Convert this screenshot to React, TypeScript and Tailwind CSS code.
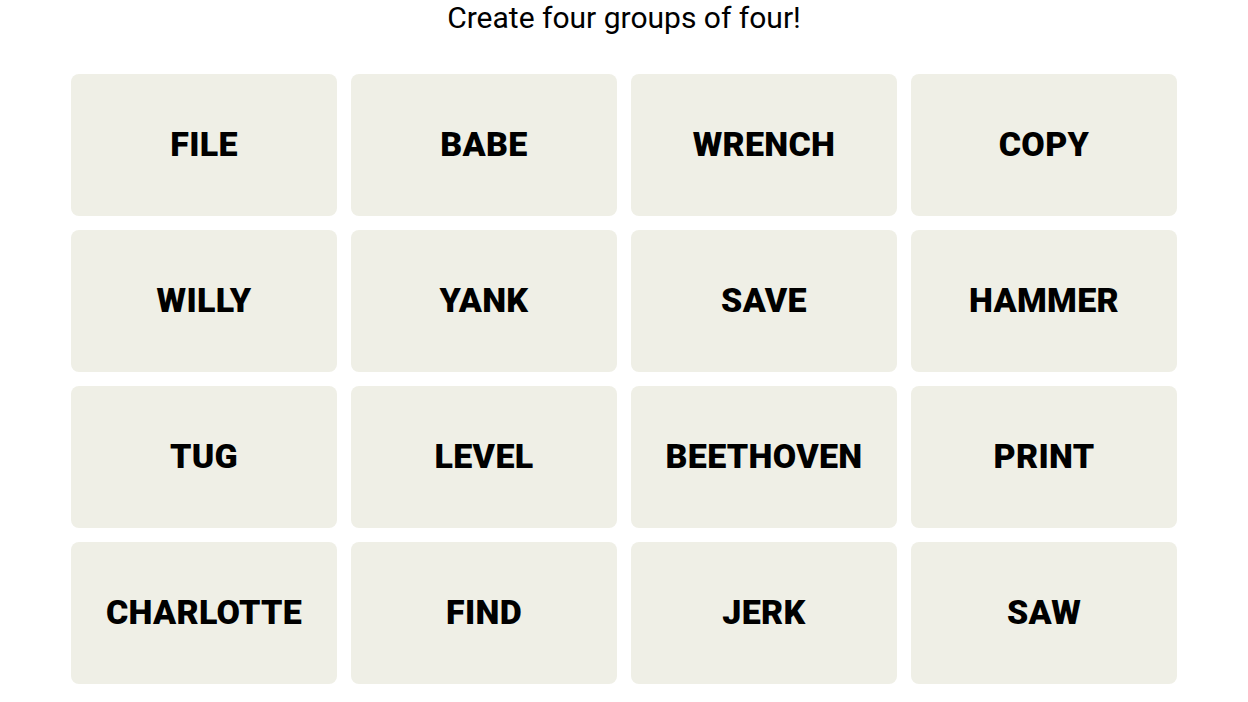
import React from "react";

const words = [
  "FILE", "BABE", "WRENCH", "COPY",
  "WILLY", "YANK", "SAVE", "HAMMER",
  "TUG", "LEVEL", "BEETHOVEN", "PRINT",
  "CHARLOTTE", "FIND", "JERK", "SAW",
];

export default function App() {
  return (
    <div className="w-[1248px] h-[702px] bg-white flex flex-col items-center" style={{ fontFamily: "Roboto, 'Liberation Sans', sans-serif" }}>
      <h1 className="text-[30px] leading-[36px] font-normal text-black mt-0 mb-[38px]">
        Create four groups of four!
      </h1>
      <div className="grid grid-cols-[repeat(4,266px)] grid-rows-[repeat(4,142px)] gap-[14px]">
        {words.map((w) => (
          <button
            key={w}
            className="bg-[#efefe6] rounded-[8px] flex items-center justify-center pb-[2px] text-[34px] font-black tracking-[0.3px] text-black"
          >
            {w}
          </button>
        ))}
      </div>
    </div>
  );
}
